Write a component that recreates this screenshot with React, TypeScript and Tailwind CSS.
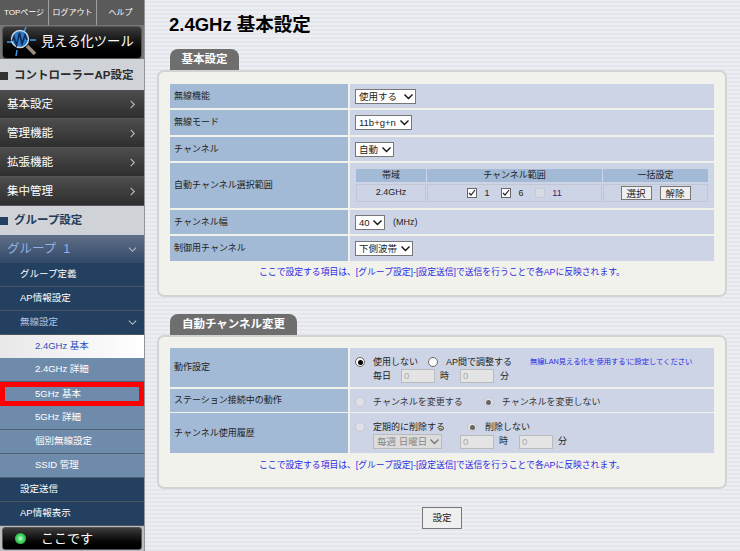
const fontStack = "font-['Liberation_Sans','Noto_Sans_CJK_JP',sans-serif]";

const darkMenu = ["基本設定", "管理機能", "拡張機能", "集中管理"];

function Chevron({ down }: { down?: boolean }) {
  return (
    <svg width="9" height="9" viewBox="0 0 10 10" fill="none" stroke="#b9bec4" strokeWidth="1.2">
      {down ? <path d="M1 3l4 4 4-4" /> : <path d="M3 1l4 4-4 4" />}
    </svg>
  );
}

function SubItem({ label, down, dim }: { label: string; down?: boolean; dim?: boolean }) {
  return (
    <div className={`h-[24px] flex items-center justify-between pl-[20px] pr-[7px] bg-[#244060] border-b border-[#4a5560] text-[9.5px] ${dim ? "text-[#a9c4ea]" : "text-white"}`}>
      <span>{label}</span>
      {down && <Chevron down />}
    </div>
  );
}

function BlueItem({ label }: { label: string }) {
  return (
    <div className="h-[24px] flex items-center pl-[35px] bg-[#6f8bab] border-b border-[#4f5f70] text-[9.5px] text-white">
      {label}
    </div>
  );
}

function Sidebar() {
  return (
    <div className="w-[145px] h-[551px] shrink-0 flex flex-col bg-[#b9bdc2] border-r border-[#8f9499]">
      {/* top links */}
      <div className="h-[25px] flex bg-[#5a5a5a] text-[8px] text-white">
        <div className="w-[49px] flex items-center justify-center border-r border-[#a0a0a0]">TOPページ</div>
        <div className="w-[48px] flex items-center justify-center border-r border-[#a0a0a0]">ログアウト</div>
        <div className="flex-1 flex items-center justify-center">ヘルプ</div>
      </div>
      <div className="h-[34px] bg-[#777] flex items-center px-[2px]">
        <div className="w-[141px] h-[33px] rounded-[4px] border border-[#555] bg-gradient-to-b from-[#3c3c3c] to-[#000] flex items-center pl-[3px] gap-[2px] text-[13.3px] whitespace-nowrap text-white">
          <svg width="33" height="30" viewBox="0 0 33 30" fill="none">
            <path d="M1 15h5M20 0l-2 5M11 23l-1 6M24 13h6" stroke="#3f9be6" strokeWidth="1.5" />
            <path d="M21 19l8 8" stroke="#9c8f80" strokeWidth="3.5" />
            <circle cx="14" cy="12" r="8.5" fill="#2a78c6" stroke="#c8d8e6" strokeWidth="1.4" />
            <path d="M6 14l2-4 2.5 8 3-12 2.5 11 3-9 2 5" stroke="#0e2a55" strokeWidth="1.6" />
          </svg>
          <span>見える化ツール</span>
        </div>
      </div>
      <div className="h-[31px] pt-[3px] flex items-center gap-[6px] bg-[#cfd2d6] text-[11.5px] font-bold text-[#2b2b2b]">
        <span className="w-[8px] h-[8px] bg-[#333]" />
        <span>コントローラーAP設定</span>
      </div>
      {darkMenu.map((m) => (
        <div key={m} className="h-[29px] flex items-center justify-between pl-[7px] pr-[7px] pt-[1px] bg-gradient-to-b from-[#4e4e4e] to-[#2e2e2e] border-b border-[#555] text-[11.5px] text-white">
          <span>{m}</span>
          <Chevron />
        </div>
      ))}
      <div className="h-[29px] flex items-center gap-[6px] bg-[#cfd2d6] text-[11.5px] font-bold text-[#243a58]">
        <span className="w-[8px] h-[8px] bg-[#244060]" />
        <span>グループ設定</span>
      </div>
      <div className="h-[28px] flex items-center justify-between pl-[7px] pr-[7px] bg-gradient-to-b from-[#5f6f86] to-[#34496a] text-[12.5px] text-[#8fb2e6]">
        <span>グループ&nbsp;&nbsp;1</span>
        <Chevron down />
      </div>
      <SubItem label="グループ定義" />
      <SubItem label="AP情報設定" />
      <SubItem label="無線設定" down dim />
      <div className="h-[23px] flex items-center pl-[35px] bg-gradient-to-r from-[#e8e8e8] to-[#ffffff] text-[9.5px] text-[#2a4fc0]">
        2.4GHz 基本
      </div>
      <BlueItem label="2.4GHz 詳細" />
      <div className="h-[24px] flex items-center pl-[30px] bg-[#6f8bab] border-[5px] border-[#ff0000] text-[9.5px] text-white">
        5GHz 基本
      </div>
      <BlueItem label="5GHz 詳細" />
      <BlueItem label="個別無線設定" />
      <BlueItem label="SSID 管理" />
      <SubItem label="設定送信" />
      <SubItem label="AP情報表示" />
      <div className="mt-[1px] mx-[2px] h-[23px] rounded-[3px] border border-[#555] bg-gradient-to-b from-[#3c3c3c] to-[#000] flex items-center pl-[12px] gap-[15px] text-[13px] text-white">
        <span className="w-[11px] h-[11px] rounded-full bg-[radial-gradient(circle_at_50%_50%,#c8f7d0_0%,#3fd45c_45%,#1d8f36_100%)]" />
        <span>ここです</span>
      </div>
    </div>
  );
}

function Row({ label, h, tight, children }: { label: string; h: string; tight?: boolean; children: React.ReactNode }) {
  return (
    <div className={`flex gap-[2px] ${h}`}>
      <div className="w-[178px] shrink-0 flex items-center pl-[4px] pt-[1px] bg-[#a3bad6] text-[9px] text-[#222]">{label}</div>
      <div className={`flex-1 flex flex-col justify-center pl-[5px] bg-[#cdd4e6] text-[9px] text-[#222] ${tight ? "pt-[3px]" : ""}`}>
        {children}
      </div>
    </div>
  );
}

function Sel({ w, value, disabled }: { w: string; value: string; disabled?: boolean }) {
  return (
    <div className={`relative ${w} h-[15px] shrink-0`}>
      <select
        disabled={disabled}
        defaultValue={value}
        className={`w-full h-full appearance-none pl-[3px] text-[9.5px] border ${disabled ? "bg-[#dcdcdc] border-[#bbb] text-[#888]" : "bg-white border-[#777] text-[#222]"}`}
      >
        <option>{value}</option>
      </select>
      <svg className="absolute right-[3px] top-[4px]" width="9" height="7" viewBox="0 0 9 7" fill="none" stroke={disabled ? "#777" : "#111"} strokeWidth="1.4">
        <path d="M0.5 1.5l4 4 4-4" />
      </svg>
    </div>
  );
}

function Num() {
  return (
    <input
      disabled
      value="0"
      readOnly
      className="w-[34px] h-[14px] pl-[2px] text-[9.5px] bg-[#e4e4e4] border border-[#bbb] text-[#aaa]"
    />
  );
}

function Radio({ checked, disabled, name, label }: { checked?: boolean; disabled?: boolean; name: string; label: string }) {
  return (
    <label className="flex items-center gap-[8px] whitespace-nowrap">
      <span className="relative w-[10px] h-[10px] flex items-center justify-center">
        <input
          type="radio"
          name={name}
          defaultChecked={checked}
          disabled={disabled}
          className={`appearance-none w-[10px] h-[10px] m-0 rounded-full border ${disabled ? "bg-[#dfe1e6] border-[#c8cad0]" : "bg-white border-[#666]"}`}
        />
        {checked && (
          <span className={`absolute w-[5px] h-[5px] rounded-full ${disabled ? "bg-[#666]" : "bg-black"}`} />
        )}
      </span>
      <span className="pt-[1px]">{label}</span>
    </label>
  );
}

function Check({ checked, disabled }: { checked?: boolean; disabled?: boolean }) {
  return (
    <span className="relative w-[10px] h-[10px] shrink-0">
      <input
        type="checkbox"
        defaultChecked={checked}
        disabled={disabled}
        className={`block appearance-none w-[10px] h-[10px] m-0 border ${disabled ? "bg-[#d8dbe2] border-[#c8cad0]" : "bg-white border-[#666]"}`}
      />
      {checked && (
        <svg className="absolute left-[1px] top-[1px]" width="8" height="8" viewBox="0 0 8 8" fill="none" stroke="#222" strokeWidth="1.2">
          <path d="M1 4l2 2 4-5" />
        </svg>
      )}
    </span>
  );
}

function Note({ mt }: { mt: string }) {
  return (
    <p className={`text-center text-[8.8px] text-[#2a2ae0] ${mt}`}>
      ここで設定する項目は、[グループ設定]-[設定送信]で送信を行うことで各APに反映されます。
    </p>
  );
}

function ChannelTable() {
  return (
    <div className="ml-[1px] w-[352px] grid grid-cols-[70px_175px_105px] gap-x-[1px] gap-y-[2px] text-[9px] text-center">
      <div className="h-[13px] leading-[13px] bg-[#a3bad6]">帯域</div>
      <div className="h-[13px] leading-[13px] bg-[#a3bad6]">チャンネル範囲</div>
      <div className="h-[13px] leading-[13px] bg-[#a3bad6]">一括設定</div>
      <div className="h-[18px] flex items-center justify-center border border-[#c2c6d0]">2.4GHz</div>
      <div className="h-[18px] flex items-center pl-[39px] border border-[#c2c6d0]">
        <Check checked />
        <span className="ml-[4px] mr-[8px] w-[12px] pt-[2px]">1</span>
        <Check checked />
        <span className="ml-[4px] mr-[8px] w-[12px] pt-[2px]">6</span>
        <Check disabled />
        <span className="ml-[4px] w-[16px] pt-[2px] text-[#402070]">11</span>
      </div>
      <div className="h-[18px] flex items-center justify-center gap-[8px] border border-[#c2c6d0]">
        <button className="w-[31px] h-[14px] bg-[#efefef] border border-[#777] text-[9.5px]">選択</button>
        <button className="w-[31px] h-[14px] bg-[#efefef] border border-[#777] text-[9.5px]">解除</button>
      </div>
    </div>
  );
}

function Panel({ title, tabW, pb, children }: { title: string; tabW: string; pb: string; children: React.ReactNode }) {
  return (
    <section>
      <div className={`${tabW} ml-[13px] h-[21px] rounded-t-[8px] bg-[#6e6e6e] flex items-center justify-center text-[11.5px] font-bold text-white`}>
        {title}
      </div>
      <div className={`w-[570px] rounded-[7px] border-2 border-[#d2d3d3] bg-[#f2f2ec] px-[11px] pt-[11px] ${pb}`}>
        {children}
      </div>
    </section>
  );
}

export default function App() {
  return (
    <div className={`w-[740px] h-[551px] overflow-hidden flex ${fontStack} bg-[#e6e9ee] bg-[repeating-linear-gradient(0deg,#e3e6ec_0px,#e3e6ec_2px,#eceef2_2px,#eceef2_4px)]`}>
      <Sidebar />
      <main className="flex-1 pl-[12px]">
        <h1 className="mt-[14px] ml-[12px] h-[21px] leading-[21px] text-[18.5px] font-bold text-black">2.4GHz 基本設定</h1>
        <div className="mt-[14px]">
          <Panel title="基本設定" tabW="w-[69px]" pb="pb-[16px]">
            <div className="mt-[1px] flex flex-col gap-[2px]">
              <Row label="無線機能" h="h-[24px]"><Sel w="w-[61px]" value="使用する" /></Row>
              <Row label="無線モード" h="h-[25px]"><Sel w="w-[57px]" value="11b+g+n" /></Row>
              <Row label="チャンネル" h="h-[24px]"><Sel w="w-[39px]" value="自動" /></Row>
              <Row label="自動チャンネル選択範囲" h="h-[45px]"><ChannelTable /></Row>
              <Row label="チャンネル幅" h="h-[24px]">
                <div className="flex items-center gap-[8px]">
                  <Sel w="w-[30px]" value="40" />
                  <span className="pt-[2px]">(MHz)</span>
                </div>
              </Row>
              <Row label="制御用チャンネル" h="h-[25px]"><Sel w="w-[58px]" value="下側波帯" /></Row>
            </div>
            <Note mt="mt-[5px]" />
          </Panel>
        </div>
        <div className="mt-[17px]">
          <Panel title="自動チャンネル変更" tabW="w-[127px]" pb="pb-[15px]">
            <div className="flex flex-col">
              <Row label="動作設定" h="h-[39px]" tight>
                <div className="flex items-center">
                  <Radio name="op" checked label="使用しない" />
                  <div className="ml-[10px]">
                    <Radio name="op" label="AP間で調整する" />
                  </div>
                  <span className="ml-[18px] text-[7.3px] text-[#2a2ae0] whitespace-nowrap">無線LAN見える化を'使用する'に設定してください</span>
                </div>
                <div className="flex items-center pl-[18px]">
                  <span className="w-[28px]">毎日</span>
                  <Num />
                  <span className="ml-[5px] w-[9px]">時</span>
                  <div className="ml-[11px]"><Num /></div>
                  <span className="ml-[6px]">分</span>
                </div>
              </Row>
              <div className="mt-[2px]">
                <Row label="ステーション接続中の動作" h="h-[23px]" tight>
                  <div className="flex items-center gap-[21px] text-[#333]">
                    <Radio name="st" disabled label="チャンネルを変更する" />
                    <Radio name="st" disabled checked label="チャンネルを変更しない" />
                  </div>
                </Row>
              </div>
              <div className="mt-[1px]">
                <Row label="チャンネル使用履歴" h="h-[40px]" tight>
                  <div className="flex items-center gap-[22px]">
                    <Radio name="hi" disabled label="定期的に削除する" />
                    <Radio name="hi" disabled checked label="削除しない" />
                  </div>
                  <div className="flex items-center pl-[18px]">
                    <Sel w="w-[69px]" value="毎週 日曜日" disabled />
                    <div className="ml-[18px]"><Num /></div>
                    <span className="ml-[5px] w-[9px]">時</span>
                    <div className="ml-[11px]"><Num /></div>
                    <span className="ml-[5px]">分</span>
                  </div>
                </Row>
              </div>
            </div>
            <Note mt="mt-[6px]" />
          </Panel>
        </div>
        <div className="mt-[18px] w-[570px] flex justify-center">
          <button className="w-[40px] h-[22px] bg-[#efefef] border border-[#777] text-[9.5px] text-[#222]">設定</button>
        </div>
      </main>
    </div>
  );
}
